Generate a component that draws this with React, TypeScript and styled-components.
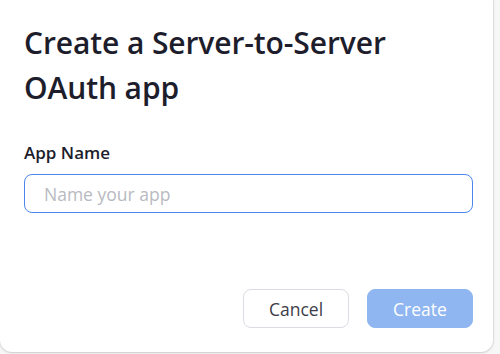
import styled, { createGlobalStyle } from "styled-components";

const Global = createGlobalStyle`
  html, body {
    margin: 0;
    padding: 0;
    background: #f7f7f8;
    font-family: "Open Sans", "Noto Sans", sans-serif;
  }
`;

const Page = styled.div`
  width: 500px;
  height: 354px;
  overflow: hidden;
`;

const Card = styled.div`
  box-sizing: border-box;
  width: 493px;
  height: 364px;
  margin-top: -12px;
  padding: 32px 20px 0 24px;
  background: #ffffff;
  border-radius: 12px;
  box-shadow: 0 0 0 1px rgba(0, 0, 0, 0.06), 0 1px 3px rgba(0, 0, 0, 0.12);
  display: flex;
  flex-direction: column;
`;

const Title = styled.h1`
  margin: 0;
  font-size: 30px;
  line-height: 45px;
  font-weight: 600;
  color: #1d1d2c;
  letter-spacing: -0.1px;
`;

const Label = styled.label`
  margin-top: 31px;
  font-size: 17px;
  line-height: 24px;
  font-weight: 600;
  color: #1d1d2c;
`;

const Input = styled.input`
  box-sizing: border-box;
  margin-top: 9px;
  height: 39px;
  width: 449px;
  padding: 0 19px;
  border: 1px solid #4d87ec;
  border-radius: 8px;
  font-family: inherit;
  font-size: 17.5px;
  color: #1d1d2c;
  outline: none;
  &::placeholder {
    color: #b8bac1;
  }
`;

const Actions = styled.div`
  margin-top: 76px;
  width: 449px;
  display: flex;
  justify-content: flex-end;
  gap: 18px;
`;

const Button = styled.button<{ $primary?: boolean }>`
  box-sizing: border-box;
  width: 106px;
  height: 39px;
  border-radius: 8px;
  font-family: inherit;
  font-size: 17.5px;
  border: 1px solid ${(p) => (p.$primary ? "#8fb6f0" : "#dcdce2")};
  background: ${(p) => (p.$primary ? "#8fb6f0" : "#ffffff")};
  color: ${(p) => (p.$primary ? "#ffffff" : "#3d3d48")};
  cursor: pointer;
`;

export default function App() {
  return (
    <Page>
      <Global />
      <Card>
        <Title>
          Create a Server-to-Server
          <br />
          OAuth app
        </Title>
        <Label htmlFor="app-name">App Name</Label>
        <Input id="app-name" placeholder="Name your app" />
        <Actions>
          <Button>Cancel</Button>
          <Button $primary disabled>
            Create
          </Button>
        </Actions>
      </Card>
    </Page>
  );
}
